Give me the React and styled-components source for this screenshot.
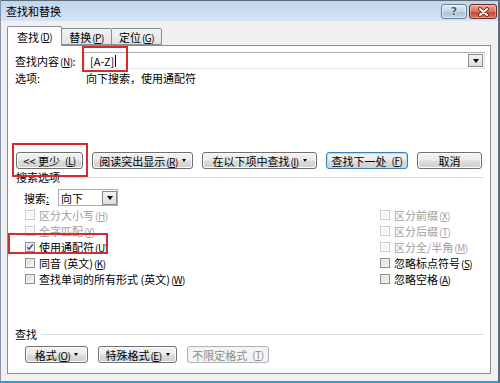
import React from 'react'
import styled, { createGlobalStyle } from 'styled-components'

const GlobalStyle = createGlobalStyle`
  html, body {
    margin: 0;
    padding: 0;
    background: #fff;
  }
  body {
    font-family: "Noto Sans CJK SC", "Noto Sans", sans-serif;
    font-size: 11px;
    color: #000;
  }
  #root {
    width: 500px;
    height: 383px;
    overflow: hidden;
  }
`

function Hk({ k }) {
  return (
    <Key>
      (<u>{k}</u>)
    </Key>
  )
}

function CheckItem({ label, k, disabled, checked }) {
  return (
    <CheckRow $disabled={disabled}>
      <Box $disabled={disabled}>
        {checked && (
          <svg width="8" height="8" viewBox="0 0 8 8">
            <path d="M1.2 4.2 L3.1 6.2 L6.8 1.4" fill="none" stroke="#3a4d8f" strokeWidth="1.5" />
          </svg>
        )}
      </Box>
      <span>
        {label}
        <Hk k={k} />
      </span>
    </CheckRow>
  )
}

export default function App() {
  return (
    <>
      <GlobalStyle />
      <Window>
        <TitleBar>
          <Title>查找和替换</Title>
          <TitleButtons>
            <HelpButton>?</HelpButton>
            <CloseButton>
              <svg width="13" height="10" viewBox="0 0 13 10">
                <path d="M3 2 L10 8 M10 2 L3 8" stroke="#5a1f17" strokeWidth="3.6" strokeLinecap="round" />
                <path d="M3 2 L10 8 M10 2 L3 8" stroke="#fff" strokeWidth="2" strokeLinecap="round" />
              </svg>
            </CloseButton>
          </TitleButtons>
        </TitleBar>

        <Body>
          <TabRow>
            <Tab $active>
              查找
              <Hk k="D" />
            </Tab>
            <Tab>
              替换
              <Hk k="P" />
            </Tab>
            <Tab>
              定位
              <Hk k="G" />
            </Tab>
          </TabRow>

          <Panel>
            <FindRow>
              <FieldLabel>
                查找内容
                <Hk k="N" />:
              </FieldLabel>
              <TextField>
                [A-Z]
                <Caret />
                <DropButton>
                  <Arrow />
                </DropButton>
              </TextField>
            </FindRow>
            <OptionsRow>
              <FieldLabel>选项:</FieldLabel>
              <span>向下搜索，使用通配符</span>
            </OptionsRow>

            <ButtonRow>
              <Button $w={67}>
                &lt;&lt; 更少
                <Hk k="L" />
              </Button>
              <Button $w={101}>
                <span>
                  阅读突出显示
                  <Hk k="R" />
                </span>
                <SmallArrow />
              </Button>
              <Button $w={115}>
                <span>
                  在以下项中查找
                  <Hk k="I" />
                </span>
                <SmallArrow />
              </Button>
              <Button $w={82} $default>
                查找下一处
                <Hk k="F" />
              </Button>
              <Button $w={65}>取消</Button>
            </ButtonRow>

            <GroupHeader $indent={1}>搜索选项</GroupHeader>

            <SearchRow>
              <SearchLabel>
                搜索<u>:</u>
              </SearchLabel>
              <Select>
                向下
                <SelectButton>
                  <Arrow />
                </SelectButton>
              </Select>
            </SearchRow>

            <CheckGrid>
              <CheckItem label="区分大小写" k="H" disabled />
              <CheckItem label="全字匹配" k="Y" disabled />
              <CheckItem label="使用通配符" k="U" checked />
              <CheckItem label="同音 (英文)" k="K" />
              <CheckItem label="查找单词的所有形式 (英文)" k="W" />
              <CheckItem label="区分前缀" k="X" disabled />
              <CheckItem label="区分后缀" k="T" disabled />
              <CheckItem label="区分全/半角" k="M" disabled />
              <CheckItem label="忽略标点符号" k="S" />
              <CheckItem label="忽略空格" k="A" />
            </CheckGrid>

            <GroupHeader $indent={0} $top={40}>
              查找
            </GroupHeader>

            <BottomRow>
              <Button $w={63}>
                <span>
                  格式
                  <Hk k="O" />
                </span>
                <SmallArrow />
              </Button>
              <Button $w={79}>
                <span>
                  特殊格式
                  <Hk k="E" />
                </span>
                <SmallArrow />
              </Button>
              <Button $w={82} disabled>
                不限定格式
                <Hk k="T" />
              </Button>
            </BottomRow>
          </Panel>
        </Body>

        {/* red annotation frames drawn over the dialog */}
        <Mark style={{ left: 81, top: 46, width: 46, height: 26 }} />
        <Mark style={{ left: 11, top: 143, width: 76, height: 34 }} />
        <Mark style={{ left: 7, top: 233, width: 100, height: 21 }} />
      </Window>
    </>
  )
}

const Window = styled.div`
  position: relative;
  width: 500px;
  height: 383px;
  box-sizing: border-box;
  background: #f0f0f0;
  border-left: 1px solid #8595a5;
  border-right: 2px solid #5f6b77;
  border-bottom: 2px solid #2f9ad6;
  display: flex;
  flex-direction: column;
`

const TitleBar = styled.div`
  height: 21px;
  box-sizing: border-box;
  border-top: 1px solid #5d6c7b;
  background: linear-gradient(#c0d5ec, #d3e3f4);
  display: flex;
  align-items: flex-start;
  padding-left: 5px;
`

const Title = styled.div`
  line-height: 20px;
  font-size: 11px;
`

const TitleButtons = styled.div`
  margin-left: auto;
  margin-top: 3px;
  margin-right: 1px;
  display: flex;
  gap: 2px;
`

const HelpButton = styled.div`
  width: 26px;
  height: 15px;
  box-sizing: border-box;
  border: 1px solid #6f7f92;
  border-radius: 3px;
  background: linear-gradient(#dde7f2 0%, #c6d5e6 50%, #aec2d8 51%, #c0d3e7 100%);
  box-shadow: inset 0 0 0 1px rgba(255, 255, 255, 0.5);
  color: #4c5560;
  font-family: "DejaVu Sans", sans-serif;
  font-weight: bold;
  font-size: 11px;
  line-height: 13px;
  text-align: center;
  text-shadow: 0 0 2px #fff, 0 0 1px #fff;
`

const CloseButton = styled.div`
  width: 28px;
  height: 15px;
  box-sizing: border-box;
  border: 1px solid #6b2b22;
  border-radius: 3px;
  background: linear-gradient(#e9a896 0%, #d8745f 50%, #c5432b 51%, #d27a63 100%);
  box-shadow: inset 0 0 0 1px rgba(255, 255, 255, 0.3);
  display: flex;
  align-items: center;
  justify-content: center;
`

const Body = styled.div`
  padding: 5px 7px 0 6px;
  display: flex;
  flex-direction: column;
`

const TabRow = styled.div`
  display: flex;
  align-items: flex-end;
  height: 19px;
`

const Tab = styled.div`
  position: relative;
  z-index: ${p => (p.$active ? 1 : 0)};
  box-sizing: border-box;
  width: ${p => (p.$active ? 55 : 51)}px;
  height: ${p => (p.$active ? 20 : 17)}px;
  margin-bottom: ${p => (p.$active ? -1 : 0)}px;
  margin-left: ${p => (p.$active ? 0 : -1)}px;
  border: 1px solid #898c95;
  border-bottom: ${p => (p.$active ? 'none' : '1px solid #898c95')};
  border-radius: 2px 2px 0 0;
  background: ${p => (p.$active ? '#fff' : 'linear-gradient(#f3f3f3, #e3e3e3)')};
  display: flex;
  align-items: center;
  justify-content: center;
  padding-top: ${p => (p.$active ? 0 : 1)}px;
  &:first-child {
    margin-left: 0;
  }
`

const Panel = styled.div`
  height: 329px;
  box-sizing: border-box;
  background: #fff;
  border: 1px solid #898c95;
  padding: 0 5px 0 7px;
  display: flex;
  flex-direction: column;
`

const Key = styled.span`
  font-size: 10px;
  letter-spacing: -0.5px;
  margin-left: 1px;
  u {
    text-underline-offset: 1px;
  }
`

const FindRow = styled.div`
  margin-top: 6px;
  height: 17px;
  display: flex;
  align-items: center;
`

const FieldLabel = styled.div`
  width: 69px;
  flex: none;
  white-space: nowrap;
`

const TextField = styled.div`
  flex: 1;
  height: 17px;
  box-sizing: border-box;
  border: 1px solid;
  border-color: #abadb3 #dbdfe6 #e3e9ef #e2e3ea;
  background: #fff;
  display: flex;
  align-items: center;
  padding-left: 5px;
`

const Caret = styled.span`
  width: 1px;
  height: 12px;
  background: #000;
  margin-left: 1px;
`

const DropButton = styled.div`
  margin-left: auto;
  margin-right: 1px;
  width: 15px;
  height: 13px;
  box-sizing: border-box;
  border: 1px solid #8a8a8a;
  background: linear-gradient(#f4f4f4, #dedede);
  display: flex;
  align-items: center;
  justify-content: center;
`

const Arrow = styled.span`
  width: 0;
  height: 0;
  border-left: 3px solid transparent;
  border-right: 3px solid transparent;
  border-top: 4px solid #000;
`

const SmallArrow = styled.span`
  width: 0;
  height: 0;
  border-left: 2.5px solid transparent;
  border-right: 2.5px solid transparent;
  border-top: 3px solid #000;
`

const OptionsRow = styled.div`
  margin-top: 2px;
  height: 14px;
  display: flex;
  align-items: center;
  & > span {
    margin-left: 2px;
  }
`

const ButtonRow = styled.div`
  margin-top: 67px;
  margin-left: 1px;
  display: flex;
  gap: 9px;
`

const Button = styled.button`
  box-sizing: border-box;
  width: ${p => p.$w}px;
  height: 17px;
  padding: 0;
  font: inherit;
  font-size: 11px;
  color: ${p => (p.disabled ? '#8c8c8c' : '#000')};
  border: 1px solid ${p => (p.$default ? '#3c7fb1' : p.disabled ? '#adb2b5' : '#707070')};
  border-radius: 3px;
  background: ${p =>
    p.disabled
      ? '#f4f4f4'
      : 'linear-gradient(#f2f2f2 0%, #ebebeb 49%, #dddddd 51%, #cfcfcf 100%)'};
  box-shadow: inset 0 0 0 1px ${p => (p.$default ? '#a8e2fb' : p.disabled ? '#f4f4f4' : '#fcfcfc')};
  display: flex;
  align-items: center;
  justify-content: center;
  gap: 4px;
  white-space: nowrap;
`

const GroupHeader = styled.div`
  margin-top: ${p => p.$top ?? 1}px;
  margin-left: ${p => p.$indent}px;
  margin-right: 1px;
  height: 14px;
  display: flex;
  align-items: center;
  gap: 4px;
  &::after {
    content: '';
    flex: 1;
    height: 1px;
    background: #d5dfe5;
  }
`

const SearchRow = styled.div`
  margin-top: 5px;
  margin-left: 9px;
  height: 17px;
  display: flex;
  align-items: center;
`

const SearchLabel = styled.div`
  width: 34px;
`

const Select = styled.div`
  width: 60px;
  height: 17px;
  box-sizing: border-box;
  border: 1px solid #abadb3;
  background: #fff;
  display: flex;
  align-items: center;
  padding-left: 2px;
`

const SelectButton = styled(DropButton)`
  width: 15px;
  height: 14px;
  margin-right: 0;
`

const CheckGrid = styled.div`
  margin-top: 1px;
  margin-left: 10px;
  display: grid;
  grid-template-columns: 355px 1fr;
  grid-template-rows: repeat(5, 16px);
  grid-auto-flow: column;
`

const CheckRow = styled.div`
  display: flex;
  align-items: center;
  gap: 4px;
  white-space: nowrap;
  color: ${p => (p.$disabled ? '#a0a0a0' : '#000')};
`

const Box = styled.span`
  width: 10px;
  height: 10px;
  flex: none;
  box-sizing: border-box;
  border: 1px solid ${p => (p.$disabled ? '#cbcbcb' : '#8f8f8f')};
  background: ${p => (p.$disabled ? '#f6f6f6' : 'linear-gradient(135deg, #d9d9d9, #f9f9f9)')};
  box-shadow: inset 0 0 0 1px ${p => (p.$disabled ? '#fff' : '#f0f0f0')};
  display: flex;
  align-items: center;
  justify-content: center;
`

const BottomRow = styled.div`
  margin-top: 5px;
  margin-left: 10px;
  display: flex;
  gap: 10px;
`

const Mark = styled.div`
  position: absolute;
  box-sizing: border-box;
  border: 2px solid #d42c2c;
  pointer-events: none;
`
